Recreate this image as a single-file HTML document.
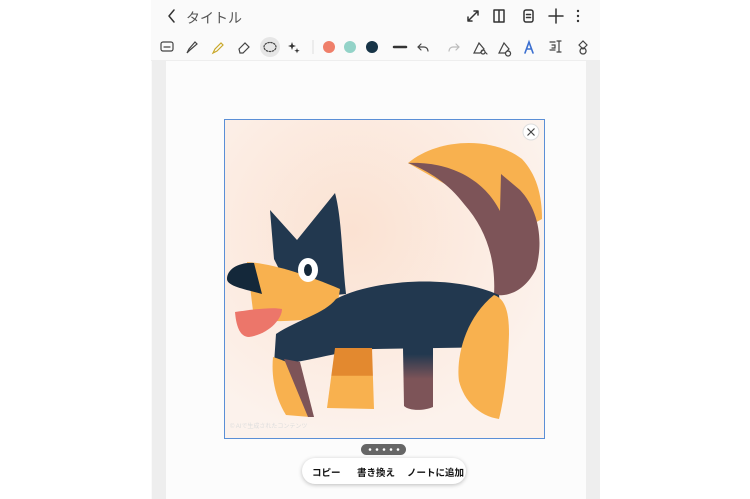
<!DOCTYPE html><html><head><meta charset="utf-8"><style>
body{margin:0;width:750px;height:499px;background:#fff;font-family:"Liberation Sans","Noto Sans CJK JP",sans-serif;position:relative;overflow:hidden}
.app{position:absolute;left:151px;top:0;width:449px;height:499px;background:#fafafa}
.tb{position:absolute;left:0;top:33px;width:449px;height:27px;background:#fafafa;border-bottom:1px solid #eee}
.gl{position:absolute;left:1px;top:61px;width:14px;height:438px;background:#eeeeee}
.gr{position:absolute;left:435px;top:61px;width:14px;height:438px;background:#eeeeee}
.pg{position:absolute;left:15px;top:61px;width:420px;height:438px;background:#fcfcfc}
.t{position:absolute;font-size:14px;color:#555}
.pill{position:absolute;left:302px;top:458px;width:164px;height:26px;border-radius:13px;background:#fff;box-shadow:0 1px 4px rgba(0,0,0,.25);font-size:9.5px;font-weight:bold;color:#111}
.pill span{position:absolute;top:7px}
</style></head><body>
<div class="app">
<div class="tb"></div>
<div class="gl"></div><div class="gr"></div><div class="pg"></div>
</div>
<svg style="position:absolute;left:0;top:0" width="750" height="70">
<g fill="none" stroke="#333" stroke-width="1.5" stroke-linecap="round" stroke-linejoin="round">
<path d="M174 10l-5 6 5 6"/>
<path d="M468 21l10-10M468 21v-4M468 21h4M478 11h-4M478 11v4"/>
<path d="M494 10h10v12h-10zM499 10v12"/>
<rect x="524" y="10" width="9" height="12" rx="2"/><path d="M526.5 14.5h4M526.5 17.5h4"/>
<path d="M556 9v14M549 16h14"/>
</g>
<g fill="#333"><circle cx="578" cy="11" r="1.2"/><circle cx="578" cy="16" r="1.2"/><circle cx="578" cy="21" r="1.2"/></g>
<circle cx="270" cy="47" r="10" fill="#e6e6e6"/>
<g fill="none" stroke="#444" stroke-width="1.2" stroke-linecap="round">
<rect x="161" y="42" width="12" height="9" rx="2"/><path d="M164 47h6"/>
<path d="M187 53l2-4 6-7 2 2-7 6z"/>
<path d="M213 53l2-4 6-6 2 2-6 6z" stroke="#c9a82a"/>
<path d="M239 49l6-6 4 4-6 6h-3z"/>
<path d="M264 47a6 4.5 0 1 1 12 0a6 4.5 0 1 1-12 0" stroke-dasharray="1.5 1.5"/>
<path d="M394 47h12" stroke="#333" stroke-width="2.5"/>
<path d="M421 44l-3 3 3 3M418 47h6a4 4 0 0 1 4 4"/>
<path d="M456 44l3 3-3 3M459 47h-6a4 4 0 0 0-4 4" stroke="#bbb"/>
<path d="M474 53l5-10 5 6-4 4zM483 50a2 2 0 1 0 .1 0M485 52l2 2"/>
<path d="M499 53l5-10 5 6-4 4zM508 51a2.5 2.5 0 1 0 .1 0"/>
<path d="M525 53l4-11 4 11M526.5 49h5" stroke="#3b6fd0" stroke-width="1.6"/>
<path d="M550 42h5M550 50h5M552 45h3v3h-3M559 41v11M557 41h4M557 52h4"/>
<path d="M579 45l4-4 4 4-4 4zM583 48a3 3 0 1 0 .1 0"/>
</g>
<path d="M292 42l1 3 3 1-3 1-1 3-1-3-3-1 3-1zM297 48l.7 2 2 .7-2 .7-.7 2-.7-2-2-.7 2-.7z" fill="#333"/>
<line x1="313" y1="40" x2="313" y2="54" stroke="#ddd"/>
<circle cx="329" cy="47" r="6" fill="#ef7f6a"/>
<circle cx="350" cy="47" r="6" fill="#93d3c8"/>
<circle cx="372" cy="47" r="6" fill="#173447"/>
</svg>
<div class="t" style="left:186px;top:8px">タイトル</div>
<svg style="position:absolute;left:224px;top:119px" width="321" height="320" viewBox="0 0 321 320">
<defs><radialGradient id="bg" cx="40%" cy="35%" r="65%"><stop offset="0" stop-color="#fbe2d2"/><stop offset="1" stop-color="#fcf2ec"/></radialGradient>
<linearGradient id="lg" x1="0" y1="0" x2="0" y2="1"><stop offset="0.1" stop-color="#22384f"/><stop offset="0.5" stop-color="#7d5458"/></linearGradient>
<linearGradient id="mg" x1="0" y1="0" x2="0" y2="1"><stop offset="0.45" stop-color="#e3892f"/><stop offset="0.46" stop-color="#f8b14f"/></linearGradient></defs>
<rect x="0.5" y="0.5" width="320" height="319" fill="url(#bg)" stroke="#5b8fd6"/>
<path d="M184 44C215 18 270 18 298 40C312 55 318 75 318 100L300 110Z" fill="#f8b14f"/>
<path d="M184 44C225 42 260 60 276 92L277 55L296 71C314 90 320 120 312 150C302 170 287 178 270 176C272 140 262 110 240 85C225 65 205 52 184 44Z" fill="#7d5458"/>
<path d="M46 91L73 121L111 74C118 100 118 140 122 175L90 178L60 160L50 140Z" fill="#22384f"/>
<path d="M23 143C50 145 80 155 116 170L112 195C90 200 60 205 30 200Z" fill="#f8b14f"/>
<path d="M30 144C15 143 3 150 3 160C3 167 20 170 38 175Z" fill="#14283a"/>
<path d="M11 193C30 190 50 188 58 190C58 200 45 215 25 218C15 218 12 205 11 193Z" fill="#ec766a"/>
<path d="M112 180C150 160 230 155 275 176L280 228L150 230C110 232 80 245 50 245L52 215C75 200 100 195 112 180Z" fill="#22384f"/>
<path d="M111 229L148 229L150 290L103 289Z" fill="url(#mg)"/>
<path d="M179 229L209 229L209 288C200 292 185 292 180 287Z" fill="url(#lg)"/>
<path d="M270 176C282 180 285 195 285 215C284 250 280 280 275 300C255 297 240 282 235 262C232 240 240 200 270 176Z" fill="#f8b14f"/>
<path d="M49 238C55 240 70 245 75 250L86 298L62 296C52 280 47 260 49 238Z" fill="#f8b14f"/>
<path d="M60 240L76 243L90 298H84Z" fill="#7d5458"/>
<ellipse cx="84" cy="151" rx="10" ry="12" fill="#fff"/><ellipse cx="84" cy="151" rx="4" ry="6" fill="#14283a"/>
<circle cx="307" cy="13" r="8" fill="#fff" stroke="#ddd"/>
<path d="M303.5 9.5l7 7M310.5 9.5l-7 7" stroke="#444" stroke-width="1.2"/>
<text x="6" y="309" font-size="6" fill="#ddd" font-family="Liberation Sans,Noto Sans CJK JP,sans-serif">© AIで生成されたコンテンツ</text>
</svg>
<div style="position:absolute;left:361px;top:444px;width:45px;height:11px;border-radius:6px;background:#666"></div>
<svg style="position:absolute;left:361px;top:444px" width="45" height="11"><g fill="#fff"><circle cx="9" cy="5.5" r="1.3"/><circle cx="16" cy="5.5" r="1.3"/><circle cx="23" cy="5.5" r="1.3"/><circle cx="30" cy="5.5" r="1.3"/><circle cx="37" cy="5.5" r="1.3"/></g></svg>
<div class="pill"><span style="left:10px">コピー</span><span style="left:55px">書き換え</span><span style="left:105px">ノートに追加</span></div>
</body></html>
